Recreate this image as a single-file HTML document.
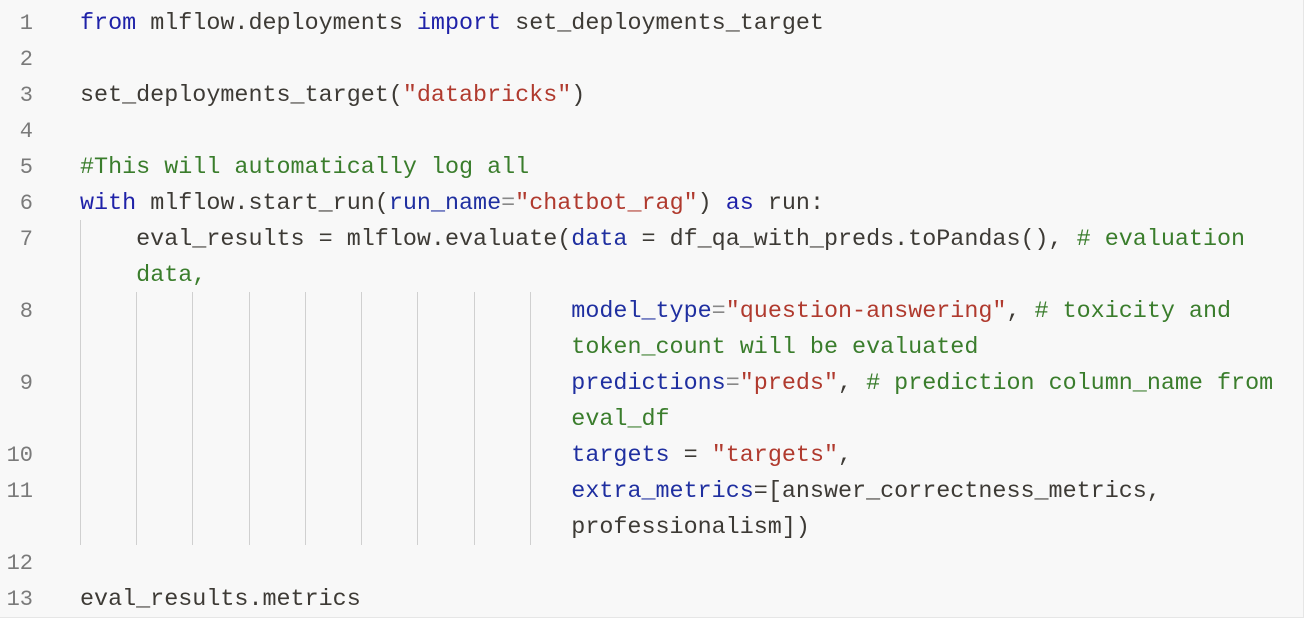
<!DOCTYPE html>
<html><head><meta charset="utf-8"><style>
body{margin:0;width:1307px;height:624px;background:#fff;overflow:hidden}
#c{position:absolute;left:0;top:0;width:1303px;height:617px;background:#f8f8f8;border-right:1px solid #e6e6e6;border-bottom:1px solid #e6e6e6}
#w{position:absolute;left:0;top:2px;width:1303px;height:615px}
.l{position:absolute;left:80px;height:36px;line-height:36px;font-family:"Liberation Mono",monospace;font-size:23.4px;color:#3d3a35;white-space:pre}
.n{position:absolute;left:0;width:33px;text-align:right;height:36px;line-height:36px;font-family:"Liberation Mono",monospace;font-size:22px;color:#7a7a7a}
.k{color:#1f22a8}.s{color:#b03a2e}.c{color:#3a7d2c}.p{color:#1f2fa0}.o{color:#888}
.g{position:absolute;width:1px;background:#d0d0d0}
</style></head><body><div id="c"><div id="w">
<div class="n" style="top:4px">1</div><div class="l" style="top:4px"><span class="k">from</span> mlflow.deployments <span class="k">import</span> set_deployments_target</div>
<div class="n" style="top:40px">2</div>
<div class="n" style="top:76px">3</div><div class="l" style="top:76px">set_deployments_target(<span class="s">"databricks"</span>)</div>
<div class="n" style="top:112px">4</div>
<div class="n" style="top:148px">5</div><div class="l" style="top:148px"><span class="c">#This will automatically log all</span></div>
<div class="n" style="top:184px">6</div><div class="l" style="top:184px"><span class="k">with</span> mlflow.start_run(<span class="p">run_name</span><span class="o">=</span><span class="s">"chatbot_rag"</span>) <span class="k">as</span> run:</div>
<div class="n" style="top:220px">7</div><div class="l" style="top:220px">    eval_results = mlflow.evaluate(<span class="p">data</span> = df_qa_with_preds.toPandas(), <span class="c"># evaluation</span></div>
<div class="l" style="top:256px">    <span class="c">data,</span></div>
<div class="n" style="top:292px">8</div><div class="l" style="top:292px">                                   <span class="p">model_type</span><span class="o">=</span><span class="s">"question-answering"</span>, <span class="c"># toxicity and</span></div>
<div class="l" style="top:328px">                                   <span class="c">token_count will be evaluated</span></div>
<div class="n" style="top:364px">9</div><div class="l" style="top:364px">                                   <span class="p">predictions</span><span class="o">=</span><span class="s">"preds"</span>, <span class="c"># prediction column_name from</span></div>
<div class="l" style="top:400px">                                   <span class="c">eval_df</span></div>
<div class="n" style="top:436px">10</div><div class="l" style="top:436px">                                   <span class="p">targets</span> = <span class="s">"targets"</span>,</div>
<div class="n" style="top:472px">11</div><div class="l" style="top:472px">                                   <span class="p">extra_metrics</span>=[answer_correctness_metrics,</div>
<div class="l" style="top:508px">                                   professionalism])</div>
<div class="n" style="top:544px">12</div>
<div class="n" style="top:580px">13</div><div class="l" style="top:580px">eval_results.metrics</div>
</div>
<div class="g" style="left:80px;top:220px;height:325px"></div>
<div class="g" style="left:136px;top:292px;height:253px"></div>
<div class="g" style="left:192px;top:292px;height:253px"></div>
<div class="g" style="left:249px;top:292px;height:253px"></div>
<div class="g" style="left:305px;top:292px;height:253px"></div>
<div class="g" style="left:361px;top:292px;height:253px"></div>
<div class="g" style="left:417px;top:292px;height:253px"></div>
<div class="g" style="left:474px;top:292px;height:253px"></div>
<div class="g" style="left:530px;top:292px;height:253px"></div>
</div></body></html>
